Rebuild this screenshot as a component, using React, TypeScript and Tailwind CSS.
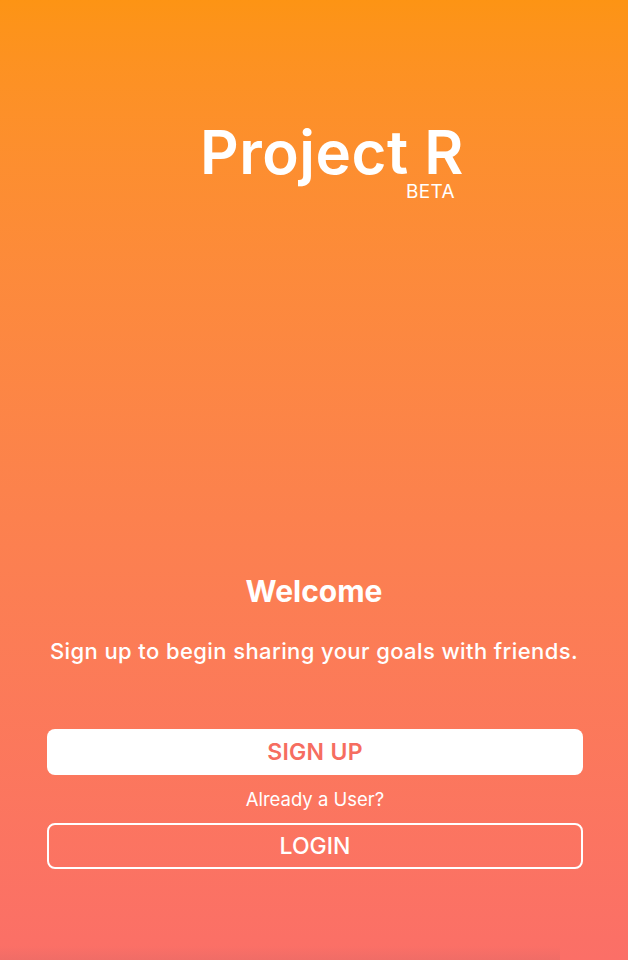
export default function App() {
  return (
    <div
      className="relative flex h-[960px] w-full flex-col items-center overflow-hidden bg-gradient-to-b from-[#fd9414] to-[#fb6f67] text-white"
      style={{ fontFamily: "Inter, 'Noto Sans', sans-serif" }}
    >
      <div className="ml-[36px] mt-[122px] flex flex-col items-end">
        <div className="text-[60px] font-semibold leading-[60px] tracking-[0.5px]">Project R</div>
        <div className="mr-[9px] text-[19px] leading-[20px] tracking-[0.3px]">BETA</div>
      </div>
      <div className="mt-[371px] text-[30px] font-bold leading-[36px]">Welcome</div>
      <div className="mt-[28px] text-[22px] font-medium leading-[28px] tracking-[0.4px]">
        Sign up to begin sharing your goals with friends.
      </div>
      <div className="ml-[2px] mt-[64px] flex w-[536px] flex-col items-center">
        <button className="flex h-[46px] w-full items-center justify-center rounded-[8px] bg-white text-[23px] font-semibold tracking-[0.3px] text-[#f66d60]">
          SIGN UP
        </button>
        <div className="mt-[12px] text-[18.5px] leading-[24px]">Already a User?</div>
        <button className="mt-[12px] flex h-[46px] w-full items-center justify-center rounded-[8px] border-2 border-white text-[23px] font-medium">
          LOGIN
        </button>
      </div>
      <div className="absolute bottom-0 left-0 h-[14px] w-[560px] bg-gradient-to-b from-transparent to-[#e86b66]/60" />
    </div>
  );
}
